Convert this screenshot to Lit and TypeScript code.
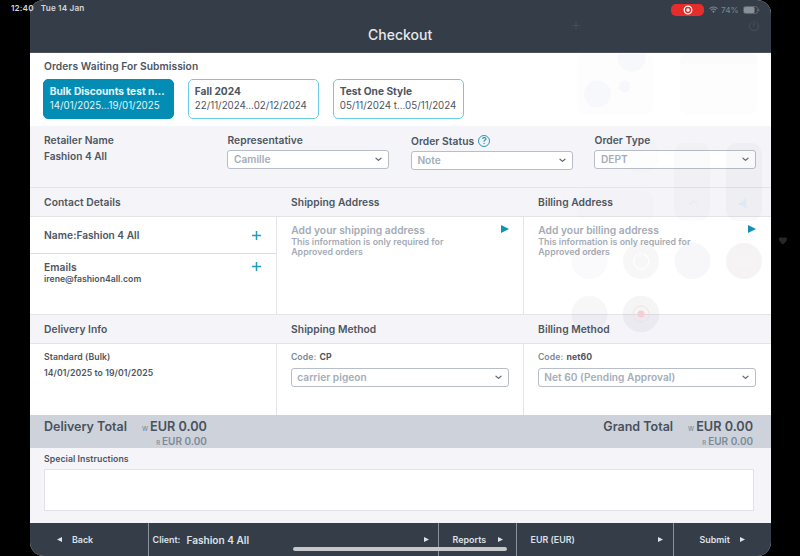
import { LitElement, html, css, svg } from "lit";
import { customElement, property } from "lit/decorators.js";

const chevron = svg`<path d="M1 1.2 L3.5 3.4 L6 1.2" fill="none" stroke="#606a75" stroke-width="1.2" stroke-linecap="round" stroke-linejoin="round"/>`;

@customElement("select-box")
class SelectBox extends LitElement {
  @property() value = "";
  static styles = css`
    :host { display: flex; align-items: center; justify-content: space-between; box-sizing: border-box;
      height: 18.5px; padding: 0 6px 0 5.4px; background: #fff; border: 1px solid #b7bec8; border-radius: 3px;
      font-size: 10.15px; font-weight: 560; color: #a4adb7; line-height: 14px; letter-spacing: 0.04px; }
    svg { width: 7px; height: 5px; display: block; }
  `;
  render() {
    return html`<span>${this.value}</span><svg viewBox="0 0 7 5">${chevron}</svg>`;
  }
}

@customElement("arrow-icon")
class ArrowIcon extends LitElement {
  @property({ type: Boolean, reflect: true }) left = false;
  static styles = css`
    :host { display: block; width: 5px; height: 5px; }
    :host([left]) { transform: scaleX(-1); }
    svg { display: block; width: 100%; height: 100%; }
  `;
  render() {
    return html`<svg viewBox="0 0 10 10" preserveAspectRatio="none"><path d="M0 0L10 5L0 10Z" fill="currentColor" /></svg>`;
  }
}

@customElement("order-card")
class OrderCard extends LitElement {
  @property() name = "";
  @property() dates = "";
  @property({ type: Boolean, reflect: true }) selected = false;
  static styles = css`
    :host { display: block; box-sizing: border-box; width: 131px; height: 40px; padding: 3.5px 0 0 5.4px;
      border: 1px solid #6ecbe6; border-radius: 5px; background: #fff; color: #4d555f; white-space: nowrap; }
    :host([selected]) { background: #038db4; border-color: #038db4; color: #e2f5fa; }
    .name { font-size: 10.2px; font-weight: 650; line-height: 14px; }
    .dates { font-size: 9.75px; font-weight: 440; line-height: 15px; }
  `;
  render() {
    return html`<div class="name">${this.name}</div><div class="dates">${this.dates}</div>`;
  }
}

@customElement("app-root")
class AppRoot extends LitElement {
  static styles = css`
    :host { display: block; position: relative; width: 800px; height: 556px; overflow: hidden; background: #000;
      font-family: Inter, "Liberation Sans", sans-serif; color: #4d565f; white-space: nowrap; }
    .device { display: flex; flex-direction: column; box-sizing: border-box; width: 741px; height: 556px; margin-left: 29.6px;
      border-radius: 14px; overflow: hidden; background: #fff; }
    .top { height: 53px; flex: none; background: #343d48; display: flex; justify-content: center; align-items: flex-end;
      box-sizing: border-box; padding-bottom: 7px; border-bottom: 1px solid #4a525d; }
    .title { font-size: 14px; font-weight: 550; line-height: 20px; color: #e6e8eb; }
    .waiting { height: 73px; flex: none; box-sizing: border-box; padding: 6px 14.4px 0; }
    .h { font-size: 10.25px; font-weight: 640; line-height: 14px; letter-spacing: 0.05px; }
    .cards { display: flex; gap: 14px; margin: 6px 0 0 -0.6px; }
    .fields { flex: none; height: 61px; box-sizing: border-box; background: #f4f4f9; padding: 7px 14.4px 0;
      display: grid; grid-template-columns: repeat(4, 162px); column-gap: 21.5px; }
    .fields .h { height: 14px; }
    .fields select-box { margin-top: 3px; }
    .status .h { display: flex; align-items: center; gap: 4px; padding-top: 1px; }
    .help { width: 12px; height: 12px; box-sizing: border-box; border: 1.3px solid #2796c0; border-radius: 50%; color: #2796c0;
      font-size: 9px; line-height: 9.6px; text-align: center; font-weight: 600; letter-spacing: 0; }
    .plain { font-size: 10.15px; font-weight: 580; line-height: 14px; }
    .fields .plain { margin-top: 2px; }
    .band { flex: none; height: 30px; box-sizing: border-box; background: #f4f4f9; border-top: 1px solid #e3e3ea; border-bottom: 1px solid #e3e3ea;
      display: grid; grid-template-columns: repeat(3, 247px); align-items: center; }
    .band .h { padding-left: 14.5px; }
    .cols { flex: none; display: grid; grid-template-columns: repeat(3, 247px); }
    .cols > div { box-sizing: border-box; }
    .cols > div + div { border-left: 1px solid #e3e3ea; margin-left: -0.4px; }
    .addresses { height: 97px; }
    .methods { height: 71px; }
    .row { display: flex; justify-content: space-between; padding: 0 16px 0 14.4px; box-sizing: border-box; }
    .person { height: 37px; align-items: center; border-bottom: 1px solid #dddde5; }
    .emails { padding-top: 6px; }
    .mail { font-size: 8.7px; font-weight: 600; line-height: 10px; }
    .plus { width: 9px; height: 9px; display: block; }
    .emails .plus { margin-top: 2px; }
    .address { display: flex; justify-content: space-between; padding: 7px 15px 0 14px; color: #a4abb5; }
    .add { font-size: 10.25px; font-weight: 640; line-height: 13px; letter-spacing: 0.03px; }
    .note { font-size: 8.8px; font-weight: 600; line-height: 10px; letter-spacing: 0.02px; }
    .address arrow-icon { width: 8px; height: 8px; color: #1390b6; margin-top: 1px; }
    .method { padding: 7px 14.5px 0 13.7px; }
    .small { font-size: 8.7px; font-weight: 600; line-height: 12px; letter-spacing: 0.08px; }
    .code { color: #7d8995; }
    .code b { font-weight: 650; color: #4d565f; margin-left: 1px; }
    .method select-box { margin-top: 5px; }
    .delivery { padding: 7px 14.4px 0; }
    .delivery .small + .small { margin-top: 4px; }
    .totals { flex: none; height: 33px; box-sizing: border-box; background: #ced3db; display: flex; justify-content: space-between; padding: 4px 17.5px 0 14.4px; }
    .total { display: flex; gap: 15px; }
    .total .label { font-size: 12.5px; font-weight: 560; line-height: 16px; color: #48515c; }
    .amounts { text-align: right; }
    .w { font-size: 12.7px; font-weight: 640; line-height: 16px; color: #48515c; }
    .r { font-size: 10px; font-weight: 560; line-height: 10px; margin-top: -1px; color: #7b8a9a; }
    .tag { font-size: 6px; font-weight: 500; color: #7b8a9a; margin-right: 2px; }
    .special { flex: none; height: 75px; box-sizing: border-box; background: #f4f4f9; padding: 5px 17px 0 14.4px; }
    .input { height: 42px; box-sizing: border-box; margin-top: 4px; background: #fff; border: 1.5px solid #e2e3e9; }
    .footer { flex: none; height: 33px; background: #343d48; display: grid; grid-template-columns: 118px 290px 78px 157px 98px;
      color: #dfe2e6; font-size: 8.9px; font-weight: 600; }
    .footer > div { display: flex; align-items: center; box-sizing: border-box; }
    .footer > div + div { border-left: 1px solid #8a9199; }
    .footer .back { padding-left: 27.4px; gap: 10px; }
    .footer .client { padding-left: 4px; padding-right: 9px; }
    .client b { font-size: 10.1px; font-weight: 600; margin-left: 6px; }
    .footer .push { margin-left: auto; }
    .footer .reports { padding-left: 14px; padding-right: 13px; }
    .footer .currency { padding-left: 14px; padding-right: 10px; }
    .footer .submit { padding-left: 26px; padding-right: 26px; }
    .overlay { position: absolute; inset: 0; width: 800px; height: 556px; pointer-events: none; }
    .statusbar { position: absolute; top: 2px; left: 11px; display: flex; gap: 7px; color: #d4d7db; font-size: 8.2px; font-weight: 640; line-height: 12px; letter-spacing: 0.15px; }
    .system { position: absolute; top: 3px; left: 671px; height: 13px; display: flex; align-items: center; color: #7c828a; font-size: 8.2px; font-weight: 450; }
    .rec { width: 33px; height: 12px; border-radius: 5px; background: #e52d2b; display: flex; align-items: center; justify-content: center; }
    .rec svg { width: 10px; height: 10px; }
    .wifi { width: 9px; height: 7px; margin: 0 3px 0 5px; }
    .battery { width: 17px; height: 8px; margin-left: 4px; }
    .home { position: absolute; left: 293px; top: 547px; width: 214px; height: 4px; border-radius: 2px; background: #c7c8cb; }
  `;

  private plus() {
    return html`<svg class="plus" viewBox="0 0 9 9"><path d="M4.5 0V9M0 4.5H9" stroke="#1f9cc0" stroke-width="1.5" /></svg>`;
  }

  private address(kind: string) {
    return html`<div class="address">
      <div><div class="add">Add your ${kind} address</div>
        <div class="note">This information is only required for<br />Approved orders</div></div>
      <arrow-icon></arrow-icon></div>`;
  }

  private method(code: string, value: string) {
    return html`<div class="method"><div class="small code">Code: <b>${code}</b></div><select-box value=${value}></select-box></div>`;
  }

  private total(label: string) {
    return html`<div class="total"><div class="label">${label}</div>
      <div class="amounts"><div class="w"><span class="tag">W</span>EUR 0.00</div><div class="r"><span class="tag">R</span>EUR 0.00</div></div></div>`;
  }

  private controls() {
    return html`<svg class="overlay" viewBox="0 0 800 556">
      <g fill="none" stroke="#434c57" stroke-width="1.2" stroke-linecap="round">
        <path d="M576 22V29M572.5 25.5H579.5" />
        <path d="M754 21V26M750.9 22.6A4.6 4.6 0 1 0 757.1 22.6" />
      </g>
      <g fill="#60507a" fill-opacity="0.012">
        <rect x="577" y="53" width="76" height="62" rx="9" />
        <rect x="680" y="53" width="77" height="62" rx="9" />
        <rect x="680" y="53" width="77" height="11" />
        <rect x="577" y="191" width="76" height="30" rx="8" />
        <circle cx="641" cy="155" r="18" />
      </g>
      <g fill="#4060b0" fill-opacity="0.03">
        <path d="M618 54A14 14 0 1 0 645 54Z" /><circle cx="597.5" cy="94" r="13.5" /><circle cx="624.5" cy="86.5" r="6" />
      </g>
      <g fill="#503848" fill-opacity="0.02">
        <rect x="674" y="143" width="36" height="78" rx="11" />
        <rect x="726" y="143" width="36" height="78" rx="11" fill-opacity="0.03" />
        <circle cx="589.5" cy="261" r="18" fill="#504878" fill-opacity="0.03" /><circle cx="641" cy="261" r="18" fill-opacity="0.04" />
        <circle cx="692.5" cy="261" r="18" fill="#504870" fill-opacity="0.045" /><circle cx="744" cy="261" r="18" fill-opacity="0.06" />
        <circle cx="589.5" cy="314" r="18" fill-opacity="0.04" /><circle cx="641" cy="314" r="18.3" fill-opacity="0.05" />
      </g>
      <path d="M637 255A7.6 7.6 0 1 0 643 254M640 252V257" fill="none" stroke="#fff" stroke-opacity="0.8" stroke-width="1.4" />
      <g fill="none" stroke="#fff" stroke-opacity="0.3"><rect x="738" y="257" width="12" height="9" rx="2" /><circle cx="744" cy="261.5" r="2.6" /></g>
      <circle cx="641" cy="314" r="8" fill="none" stroke="#f4dcdf" stroke-width="0.9" />
      <circle cx="641" cy="314" r="3.5" fill="#f6cdd1" />
      <path d="M739 203H742L746 198V208L742 205H739ZM739 199L748 208" fill="#dcebf2" stroke="#dcebf2" stroke-width="0.6" />
      <path d="M690 205A4 4 0 0 1 697 203" fill="none" stroke="#f1e8eb" stroke-width="1.5" />
      <path d="M783 244.5C776.5 240 779 235.7 783 238C787 235.7 789.5 240 783 244.5Z" fill="#24282f" />
    </svg>`;
  }

  render() {
    return html`
      <div class="device">
        <div class="top"><div class="title">Checkout</div></div>
        <div class="waiting">
          <div class="h">Orders Waiting For Submission</div>
          <div class="cards">
            <order-card selected name="Bulk Discounts test n..." dates="14/01/2025...19/01/2025"></order-card>
            <order-card name="Fall 2024" dates="22/11/2024...02/12/2024"></order-card>
            <order-card name="Test One Style" dates="05/11/2024 t...05/11/2024"></order-card>
          </div>
        </div>
        <div class="fields">
          <div><div class="h">Retailer Name</div><div class="plain">Fashion 4 All</div></div>
          <div><div class="h">Representative</div><select-box value="Camille"></select-box></div>
          <div class="status"><div class="h">Order Status <span class="help">?</span></div><select-box value="Note"></select-box></div>
          <div><div class="h">Order Type</div><select-box value="DEPT"></select-box></div>
        </div>
        <div class="band"><div class="h">Contact Details</div><div class="h">Shipping Address</div><div class="h">Billing Address</div></div>
        <div class="cols addresses">
          <div>
            <div class="row person"><div class="plain"><span class="h">Name:</span>Fashion 4 All</div>${this.plus()}</div>
            <div class="row emails"><div><div class="h">Emails</div><div class="mail">irene@fashion4all.com</div></div>${this.plus()}</div>
          </div>
          <div>${this.address("shipping")}</div>
          <div>${this.address("billing")}</div>
        </div>
        <div class="band"><div class="h">Delivery Info</div><div class="h">Shipping Method</div><div class="h">Billing Method</div></div>
        <div class="cols methods">
          <div class="delivery"><div class="small">Standard (Bulk)</div><div class="small">14/01/2025 to 19/01/2025</div></div>
          <div>${this.method("CP", "carrier pigeon")}</div>
          <div>${this.method("net60", "Net 60 (Pending Approval)")}</div>
        </div>
        <div class="totals">${this.total("Delivery Total")}${this.total("Grand Total")}</div>
        <div class="special"><div class="small">Special Instructions</div><div class="input"></div></div>
        <div class="footer">
          <div class="back"><arrow-icon left></arrow-icon><span>Back</span></div>
          <div class="client"><span>Client:</span><b>Fashion 4 All</b><arrow-icon class="push"></arrow-icon></div>
          <div class="reports"><span>Reports</span><arrow-icon class="push"></arrow-icon></div>
          <div class="currency"><span>EUR (EUR)</span><arrow-icon class="push"></arrow-icon></div>
          <div class="submit"><span>Submit</span><arrow-icon class="push"></arrow-icon></div>
        </div>
      </div>
      ${this.controls()}
      <div class="statusbar"><span>12:40</span><span>Tue 14 Jan</span></div>
      <div class="system">
        <div class="rec"><svg viewBox="0 0 10 10"><circle cx="5" cy="5" r="3.8" fill="none" stroke="#fff" stroke-width="1.3" /><circle cx="5" cy="5" r="1.7" fill="#fff" /></svg></div>
        <svg class="wifi" viewBox="0 0 9 7"><g fill="none" stroke="#858b93" stroke-width="1.1"><path d="M0.5 2.6A5.7 5.7 0 0 1 8.5 2.6M2 4.2A3.6 3.6 0 0 1 7 4.2" /></g><path d="M3.2 5.4A1.9 1.9 0 0 1 5.8 5.4L4.5 6.9Z" fill="#858b93" /></svg>
        <span>74%</span>
        <svg class="battery" viewBox="0 0 17 8"><rect x="0.5" y="0.5" width="14" height="7" rx="2" fill="none" stroke="#5d656f" /><rect x="1" y="1" width="10.5" height="6" rx="1.3" fill="#8a9098" /><path d="M15.7 2.8V5.2" stroke="#5d656f" stroke-width="1.2" /></svg>
      </div>
      <div class="home"></div>
    `;
  }
}
